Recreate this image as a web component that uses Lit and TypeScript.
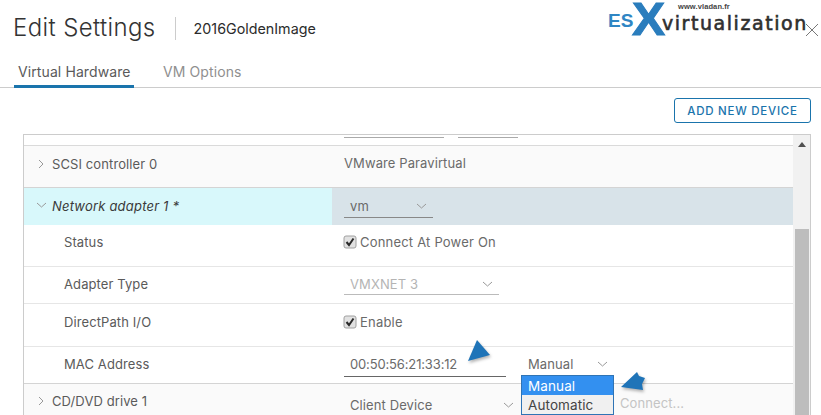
import { LitElement, html, css, svg } from "lit";
import { customElement } from "lit/decorators.js";

const chevR = html`<svg class="chev" width="10" height="10" viewBox="0 0 10 10"><path d="M3 1l4 4-4 4" fill="none" stroke="#999" stroke-width="1"/></svg>`;
const chevD = (c = "#999") => html`<svg class="chev" width="11" height="8" viewBox="0 0 11 8"><path d="M1 2l4.5 4L10 2" fill="none" stroke="${c}" stroke-width="1"/></svg>`;
const tick = html`<svg class="tick" width="14" height="14" viewBox="0 0 14 14"><rect x="1" y="1" width="12" height="12" rx="2" fill="#e2e2e2" stroke="#a0a0a0"/><path d="M3.5 7l2.5 3L10.5 3.5" fill="none" stroke="#2b2b2b" stroke-width="2"/></svg>`;

@customElement("app-root")
export class AppRoot extends LitElement {
  static styles = css`
    :host { display: block; width: 821px; height: 415px; overflow: hidden; position: relative; background: #fff;
      font-family: "Inter", "Liberation Sans", sans-serif; font-size: 13px; color: #5a5a5a; letter-spacing: .1px; }
    * { box-sizing: border-box; }
    .header { height: 59px; display: flex; align-items: center; padding: 0 0 3px 13px; }
    .title { font-size: 24px; font-weight: 300; color: #333; letter-spacing: .38px; line-height: 28px; }
    .sep { width: 1px; height: 23px; background: #ccc; margin: 0 18px 0 19px; }
    .vm { font-size: 14.3px; color: #2b2b2b; letter-spacing: 0; }
    .tabs { height: 29px; border-bottom: 1px solid #ccc; display: flex; padding-left: 14px; }
    .tab { height: 29px; padding: 4px 4px 0 4px; font-size: 14px; line-height: 18px; border-bottom: 3px solid transparent; white-space: nowrap; }
    .tab.on { color: #5a5a5a; border-bottom-color: #1a74ac; width: 120px; }
    .tab.off { margin-left: 25px; color: #8f8f8f; }
    .toolbar { height: 46px; display: flex; justify-content: flex-end; align-items: flex-start; padding: 10px 10px 0 0; }
    .btn { width: 137px; height: 25px; border: 1px solid #1a74ac; border-radius: 3px; color: #1a74ac; font-size: 11.5px; font-weight: 500;
      letter-spacing: .75px; display: flex; align-items: center; justify-content: center; background: #fff; }
    .panel { margin-left: 23px; width: 788px; height: 281px; border: 1px solid #ccc; border-bottom: 0; display: flex; overflow: hidden; }
    .rows { width: 769px; flex: none; }
    .row { display: grid; grid-template-columns: 308px 1fr; border-bottom: 1px solid #e6e6e6; }
    .row.top { height: 11px; border-bottom-color: #dadada; background: #fff; }
    .row.group { background: #fafafa; border-bottom-color: #d4d4d4; }
    .row.net { background: #d8e3e9; border: 0; }
    .row.r-scsi { height: 42px; padding-top: 9px; }
    .row.r-net { height: 37px; }
    .row.r-status { height: 42px; padding-top: 8px; }
    .row.r-type { height: 37px; padding-top: 4px; }
    .row.r-direct { height: 43px; padding-top: 9px; }
    .row.r-mac { height: 37px; padding-top: 6px; border-bottom-color: #d4d4d4; }
    .row.r-cd { height: 40px; padding-top: 8px; }
    .k { display: flex; align-items: flex-start; padding-left: 12px; }
    .k .chev { margin-top: 4px; flex: none; }
    .k .lbl { margin-left: 6px; line-height: 18px; }
    .k.sub { padding-left: 34px; }
    .k.sub.mt { padding-top: 4px; }
    .k.sub.mt3 { padding-top: 2px; }
    .net .k { background: #d8f8fb; font-style: italic; color: #3a3a3a; padding-top: 9px; letter-spacing: .2px; }
    .net .k .lbl { margin-left: 5px; }
    .net .v { padding-top: 6px; }
    .v { padding-left: 12px; display: flex; align-items: flex-start; color: #6a6a6a; }
    .top .v { gap: 14px; padding-top: 2px; }
    .top .v i { display: block; height: 1px; background: #aaa; }
    .top .v .a { width: 100px; }
    .top .v .b { width: 60px; }
    .sel { display: flex; justify-content: space-between; align-items: center; height: 24px; padding: 0 6px; border-bottom: 1px solid #888; line-height: 18px; }
    .sel.w-vm { width: 89px; }
    .sel.dis { width: 155px; color: #b4b4b4; border-bottom-color: #bbb; padding-top: 2px; }
    .sel.cd { width: 176px; height: 18px; border: 0; margin-top: 4px; }
    .check { display: flex; align-items: center; gap: 3px; line-height: 18px; letter-spacing: .2px; }
    .tick { margin-left: -1px; flex: none; }
    .mac { display: flex; width: 162px; height: 24px; padding: 0 6px 2px; border-bottom: 1px solid #666; align-items: center; letter-spacing: -.15px; }
    .mode { display: flex; width: 92px; margin-left: 16px; height: 24px; padding: 0 6px 2px; justify-content: space-between; align-items: center; }
    .dd { position: absolute; left: 521px; top: 375px; width: 93px; height: 40px; border: 1px solid #2f74b5; background: #f0f0f0; font-size: 13.5px; color: #444; }
    .dd div { height: 19px; padding-left: 6px; line-height: 20px; }
    .dd .hi { background: #3390f0; color: #fff; }
    .connect { position: absolute; left: 620px; top: 394px; color: #c4c4c4; line-height: 18px; }
    .scroll { flex: 1; background: #f1f1f1; position: relative; display: flex; flex-direction: column; align-items: center; padding-top: 7px; }
    .up { width: 0; height: 0; border-left: 4px solid transparent; border-right: 4px solid transparent; border-bottom: 5px solid #505050; }
    .thumb { position: absolute; left: 2px; right: 1px; top: 94px; bottom: 0; background: #bdbdbd; }
    .close { position: absolute; left: 805px; top: 23px; }
    .logo { position: absolute; left: 607px; top: 0; width: 205px; height: 38px; }
    .es { position: absolute; left: 1px; top: 10px; font: 700 19px/22px "Liberation Sans", sans-serif; color: #2f86c4; letter-spacing: .2px; }
    .x { position: absolute; left: 25px; top: 0; font: 900 46px/38px "Liberation Sans", sans-serif; color: #2a7dbd; transform: scaleX(1.08); transform-origin: left; -webkit-text-stroke: 1px #2a7dbd; }
    .virt { position: absolute; left: 55px; top: 11px; font: 400 19px/24px "DejaVu Sans", sans-serif; color: #2f2f2f; letter-spacing: 1.55px; -webkit-text-stroke: .6px #2f2f2f; }
    .www { position: absolute; left: 71px; top: 3px; font: 700 7.5px/8px "Liberation Sans", sans-serif; color: #444; }
    .arrows { position: absolute; left: 0; top: 0; pointer-events: none; filter: drop-shadow(1px 2px 1.5px rgba(0,0,0,.3)); }
  `;

  render() {
    return html`
      <div class="header"><span class="title">Edit Settings</span><span class="sep"></span><span class="vm">2016GoldenImage</span></div>
      <div class="tabs"><div class="tab on">Virtual Hardware</div><div class="tab off">VM Options</div></div>
      <div class="toolbar"><div class="btn">ADD NEW DEVICE</div></div>
      <div class="panel">
        <div class="rows">
          <div class="row top"><div></div><div class="v"><i class="a"></i><i class="b"></i></div></div>
          <div class="row group r-scsi"><div class="k">${chevR}<span class="lbl">SCSI controller 0</span></div><div class="v">VMware Paravirtual</div></div>
          <div class="row net r-net"><div class="k">${chevD()}<span class="lbl">Network adapter 1 *</span></div><div class="v"><div class="sel w-vm"><span>vm</span>${chevD()}</div></div></div>
          <div class="row r-status"><div class="k sub"><span class="lbl">Status</span></div><div class="v"><div class="check">${tick}Connect At Power On</div></div></div>
          <div class="row r-type"><div class="k sub mt"><span class="lbl">Adapter Type</span></div><div class="v"><div class="sel dis"><span>VMXNET 3</span>${chevD()}</div></div></div>
          <div class="row r-direct"><div class="k sub"><span class="lbl">DirectPath I/O</span></div><div class="v"><div class="check">${tick}Enable</div></div></div>
          <div class="row r-mac"><div class="k sub mt3"><span class="lbl">MAC Address</span></div><div class="v"><div class="mac">00:50:56:21:33:12</div><div class="mode"><span>Manual</span>${chevD()}</div></div></div>
          <div class="row group r-cd"><div class="k">${chevR}<span class="lbl">CD/DVD drive 1</span></div><div class="v"><div class="sel cd"><span>Client Device</span>${chevD()}</div></div></div>
        </div>
        <div class="scroll"><div class="up"></div><div class="thumb"></div></div>
      </div>
      <span class="connect">Connect...</span>
      <div class="dd"><div class="hi">Manual</div><div>Automatic</div></div>
      <div class="logo"><span class="es">ES</span><span class="x">X</span><span class="virt">virtualization</span><span class="www">www.vladan.fr</span></div>
      <svg class="close" width="14" height="14" viewBox="0 0 14 14"><path d="M1 1l12 12M13 1L1 13" stroke="#777" stroke-width="1" fill="none"/></svg>
      <svg class="arrows" width="821" height="415" viewBox="0 0 821 415">
        ${svg`<path d="M468 361L477 340L490 355Z" fill="#1f74b8"/><path d="M621 387L637 372L639 376L645 378L642 384L643 390Z" fill="#1f74b8"/>`}
      </svg>`;
  }
}
